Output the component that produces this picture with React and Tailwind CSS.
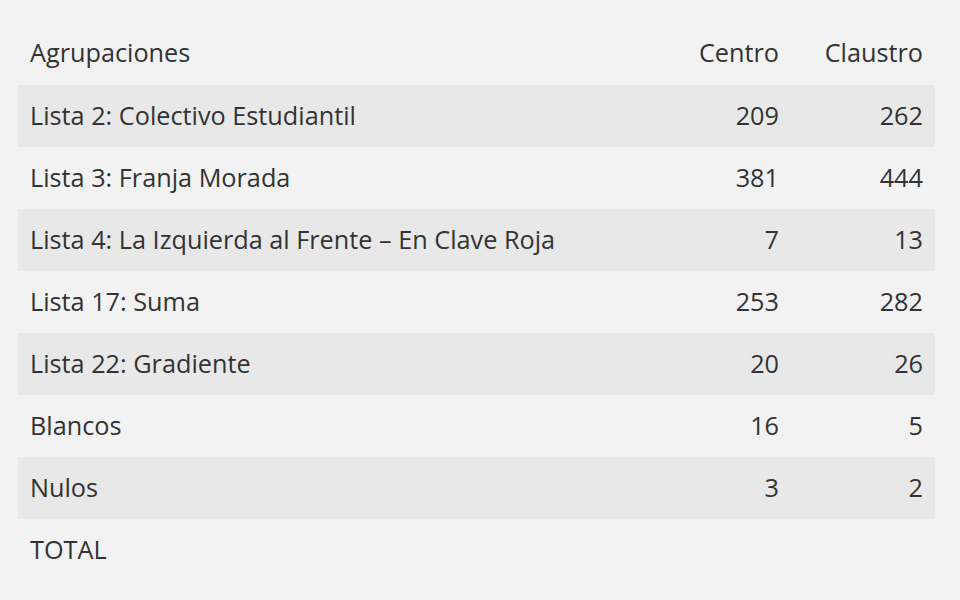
const rows = [
  ["Lista 2: Colectivo Estudiantil", "209", "262"],
  ["Lista 3: Franja Morada", "381", "444"],
  ["Lista 4: La Izquierda al Frente – En Clave Roja", "7", "13"],
  ["Lista 17: Suma", "253", "282"],
  ["Lista 22: Gradiente", "20", "26"],
  ["Blancos", "16", "5"],
  ["Nulos", "3", "2"],
  ["TOTAL", "", ""],
];

export default function App() {
  return (
    <div className="min-h-[600px] w-[960px] bg-[#f2f2f2] pt-[22px] pl-[18px] pr-[25px] text-[#333] text-[25.25px] leading-[30px]" style={{ fontFamily: '"Open Sans", sans-serif' }}>
      <div className="grid grid-cols-[1fr_144px_144px] h-[63px] pb-[4px] items-center">
        <div className="pl-3">Agrupaciones</div>
        <div className="pr-3 text-right">Centro</div>
        <div className="pr-3 text-right">Claustro</div>
      </div>
      {rows.map((r, i) => (
        <div key={i} className={"grid grid-cols-[1fr_144px_144px] h-[62px] pb-[3px] items-center " + (i % 2 === 0 ? "bg-[#e8e8e8]" : "")}>
          <div className="pl-3">{r[0]}</div>
          <div className="pr-3 text-right">{r[1]}</div>
          <div className="pr-3 text-right">{r[2]}</div>
        </div>
      ))}
    </div>
  );
}
